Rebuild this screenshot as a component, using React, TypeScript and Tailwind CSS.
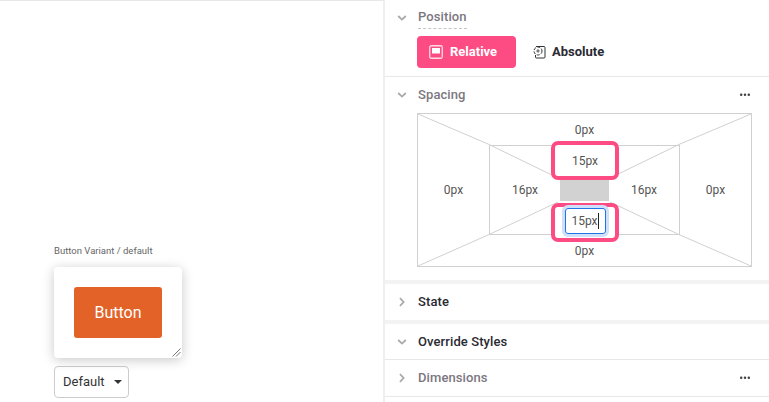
const Down = () => (
  <svg width="10" height="10" viewBox="0 0 10 10" className="shrink-0"><path d="M1.2 3l3.8 3.6L8.8 3" fill="none" stroke="#aaa" strokeWidth="1.8" /></svg>
);
const Right = () => (
  <svg width="10" height="10" viewBox="0 0 10 10" className="shrink-0"><path d="M3 1.2l3.6 3.8L3 8.8" fill="none" stroke="#aaa" strokeWidth="1.8" /></svg>
);
const Dots = () => (
  <svg width="10" height="4" viewBox="0 0 10 4" className="ml-auto mr-[19px]"><g fill="#444"><rect x="0" y="0.5" width="2.4" height="2.6" rx="1" /><rect x="3.8" y="0.5" width="2.4" height="2.6" rx="1" /><rect x="7.6" y="0.5" width="2.4" height="2.6" rx="1" /></g></svg>
);

function Header({ open, title, dark, dots, className }: { open?: boolean; title: string; dark?: boolean; dots?: boolean; className?: string }) {
  return (
    <div className={`flex items-center pl-[12px] ${className ?? ""}`}>
      {open ? <Down /> : <Right />}
      <span className={`ml-[11px] text-[13px] font-medium tracking-[0.1px] ${dark ? "text-[#2a2a33]" : "text-[#7b7780]"}`}>{title}</span>
      {dots && <Dots />}
    </div>
  );
}

export default function App() {
  const label = "text-[12px] text-[#555]";
  return (
    <div className="flex h-[402px] w-[769px] overflow-hidden bg-white font-['Roboto',sans-serif]">
      <div className="flex h-full w-[385px] shrink-0 flex-col border-t border-t-[#e8e8e8] border-r-2 border-r-[#efefef] pl-[54px] pt-[243px]">
        <div className="text-[9.5px] leading-[14px] text-[#666]">Button Variant / default</div>
        <div className="relative mt-[9px] flex h-[91px] w-[128px] items-center justify-center rounded-[4px] bg-white shadow-[0_2px_12px_rgba(0,0,0,0.22)]">
          <div className="flex h-[51px] w-[88px] items-center justify-center rounded-[3px] bg-[#e36227] text-[16px] text-white">Button</div>
          <svg width="9" height="9" viewBox="0 0 9 9" className="absolute bottom-[1px] right-[1px]"><path d="M0.5 8.5l8-8M4 8.5l4.5-4.5" stroke="#666" strokeWidth="0.9" fill="none" /></svg>
        </div>
        <div className="mt-[8px] flex h-[32px] w-[75px] items-center rounded-[4px] border border-[#ccc] pl-[8px] text-[13px] text-[#333]">
          Default
          <svg width="8" height="4" viewBox="0 0 8 4" className="ml-[9px]"><path d="M0 0h8L4 4z" fill="#333" /></svg>
        </div>
      </div>

      <div className="min-w-0 flex-1">
        <div className="h-[77px] border-b border-[#e8e8e8]">
          <div className="flex items-start pl-[12px] pt-[8px]">
            <div className="mt-[5px]"><Down /></div>
            <span className="ml-[11px] border-b border-dashed border-[#c4c4c4] pb-[3px] text-[13px] leading-[17px] font-medium tracking-[0.1px] text-[#7b7780]">Position</span>
          </div>
          <div className="ml-[32px] mt-[7px] flex items-center">
            <div className="flex h-[32px] w-[99px] items-center rounded-[4px] bg-[#fd4b84] pl-[12px] text-[13px] font-bold text-white">
              <svg width="14" height="14" viewBox="0 0 14 14" className="mr-[7px]"><rect x="0.75" y="0.75" width="12.5" height="12.5" rx="1.5" fill="none" stroke="#fff" strokeOpacity="0.8" strokeWidth="1.3" /><rect x="3" y="3" width="8" height="5.5" fill="#fff" /></svg>
              Relative
            </div>
            <div className="ml-[16px] flex items-center text-[13px] font-bold text-[#2a2a33]">
              <svg width="14" height="14" viewBox="0 0 14 14" className="mr-[6px]"><path d="M4 1.5h8a1 1 0 0 1 1 1v9.5a1 1 0 0 1-1 1H4.5a1 1 0 0 1-1-1V10" fill="none" stroke="#333" strokeWidth="1" /><circle cx="6" cy="6" r="4" fill="#fff" stroke="#333" strokeWidth="1" strokeDasharray="3 1.4" /><path d="M6 4.2v3.6M4.2 6h3.6" stroke="#333" strokeWidth="0.8" /></svg>
              Absolute
            </div>
          </div>
        </div>

        <div className="h-[203px]">
          <Header open title="Spacing" dots className="h-[36px]" />
          <div className="relative ml-[32px] grid h-[154px] w-[335px] grid-cols-[71px_1fr_71px] grid-rows-[31px_1fr_31px] border border-[#d0d0d0] text-center">
            <svg width="333" height="152" className="absolute inset-0" viewBox="0 0 333 152">
              <path d="M0 0L70 30M333 0L262 30M0 152L70 121M333 152L262 121M70 30L140 64M262 30L192 64M70 121L140 88M262 121L192 88" stroke="#d0d0d0" fill="none" />
            </svg>
            <div className={`relative col-start-2 flex items-center justify-center pt-[1px] ${label}`}>0px</div>
            <div className={`relative col-start-1 row-start-2 flex items-center justify-center ${label}`}>0px</div>
            <div className="relative col-start-2 row-start-2 grid grid-cols-[70px_1fr_70px] grid-rows-[1fr_22px_1fr] border border-[#d0d0d0]">
              <div className="col-start-2 row-start-2 bg-[#d2d2d2]" />
              <div className={`col-start-1 row-start-2 flex items-center justify-center ${label}`}>16px</div>
              <div className={`col-start-3 row-start-2 flex items-center justify-center ${label}`}>16px</div>
            </div>
            <div className={`relative col-start-3 row-start-2 flex items-center justify-center ${label}`}>0px</div>
            <div className={`relative col-start-2 row-start-3 flex items-center justify-center ${label}`}>0px</div>
            <div className={`absolute left-[133px] top-[27px] flex h-[39px] w-[68px] items-center justify-center rounded-[7px] border-[4px] border-[#fd4b84] bg-white ${label}`}>15px</div>
            <div className={`absolute left-[133px] top-[89px] flex h-[39px] w-[68px] items-start justify-center rounded-[7px] border-[4px] border-[#fd4b84] bg-white pt-[1px] ${label}`}>
              <div className="flex h-[26px] w-[41px] items-center justify-center rounded-[3px] border border-[#2273e6] shadow-[0_0_0_3px_#cfe0fa]">
                15px<span className="h-[16px] w-px bg-[#222]" />
              </div>
            </div>
          </div>
        </div>

        <div className="h-[4px] bg-[#f3f3f3]" />
        <Header title="State" dark className="h-[36px]" />
        <div className="h-[4px] bg-[#f3f3f3]" />
        <Header open title="Override Styles" dark className="h-[36px] border-b border-[#e8e8e8]" />
        <Header title="Dimensions" dots className="h-[37px] border-b border-[#e8e8e8]" />
      </div>
    </div>
  );
}
